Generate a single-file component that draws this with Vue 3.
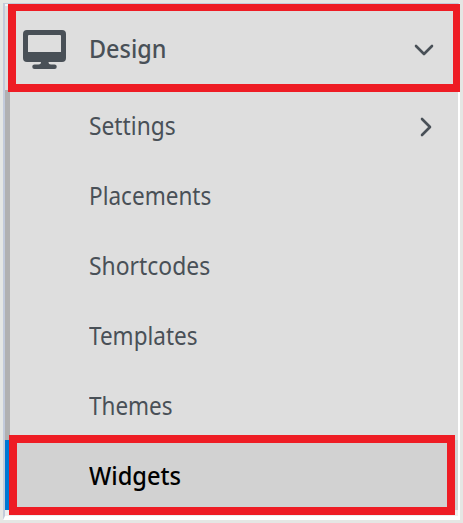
<script setup>
const items = [
  { name: 'settings', label: 'Settings', more: true },
  { name: 'placements', label: 'Placements' },
  { name: 'shortcodes', label: 'Shortcodes' },
  { name: 'templates', label: 'Templates' },
  { name: 'themes', label: 'Themes' },
  { name: 'widgets', label: 'Widgets', active: true },
]
</script>

<template>
  <div class="page">
    <nav class="panel">
      <header class="head">
        <svg class="monitor" width="43" height="39" viewBox="0 0 43 39">
          <path fill-rule="evenodd" d="M4 0H39Q43 0 43 4V28Q43 32 39 32H25.500Q25.500 34.500 28 34.500H31.500A2.200 2.200 0 0 1 31.500 39H11.500A2.200 2.200 0 0 1 11.500 34.500H15.500Q18 34.500 18 32H4Q0 32 0 28V4Q0 0 4 0ZM6 5Q5 5 5 6V22H38V6Q38 5 37 5Z" />
        </svg>
        <span class="label design">Design</span>
        <svg class="chev down" width="20" height="12" viewBox="0 0 20 12"><path d="M2 2L10 10L18 2" /></svg>
      </header>
      <ul class="list">
        <li v-for="item in items" :key="item.name" class="item" :class="{ active: item.active }">
          <span class="label" :class="item.name">{{ item.label }}</span>
          <svg v-if="item.more" class="chev right" width="12" height="20" viewBox="0 0 12 20"><path d="M2 2L10 10L2 18" /></svg>
        </li>
      </ul>
    </nav>
    <div class="mark mark-head"></div>
    <div class="mark mark-item"></div>
  </div>
</template>

<style>
body { margin: 0; }
</style>

<style scoped>
.page {
  position: relative;
  box-sizing: border-box;
  width: 463px;
  height: 523px;
  padding: 3px;
  background: #e5e7e4;
  font-family: "Noto Sans", "Open Sans", sans-serif;
  overflow: hidden;
}
.panel {
  box-sizing: border-box;
  height: 517px;
  border-top: 1px solid #c3cad8;
  border-left: 2px solid #c3cbdb;
  border-right: 2px solid #fff;
  border-bottom: 4px solid #fff;
  background: #efefef;
}
.head {
  box-sizing: border-box;
  display: flex;
  align-items: center;
  height: 86px;
  padding: 4px 24px 0 18px;
  border-top: 2px solid #f4f5f8;
  background: #dedede;
}
.monitor { fill: #495057; flex: none; margin-top: -2px; }
.head .label { margin-left: 23px; margin-top: -2px; }
.list { margin: 0; padding: 0; list-style: none; }
.item {
  box-sizing: border-box;
  display: flex;
  align-items: center;
  height: 70px;
  padding: 3px 26px 0 79px;
  border-left: 5px solid #b1b1b1;
  background: #dedede;
}
.item.active { background: #d2d2d2; border-left-color: #0078d4; }
.label {
  font-size: 24.5px;
  line-height: 34px;
  color: #495057;
  white-space: nowrap;
  transform-origin: 0 50%;
}
.item .label { margin-top: -2px; }
.design { font-weight: 500; transform: scaleX(0.955); }
.settings { transform: scaleX(0.93); }
.placements { transform: scaleX(0.92); }
.shortcodes { transform: scaleX(0.935); }
.templates { transform: scaleX(0.918); }
.themes { transform: scaleX(0.918); }
.widgets { transform: scaleX(0.965); }
.active .label { font-weight: 500; color: #000; }
.chev {
  margin-left: auto;
  fill: none;
  stroke: #495057;
  stroke-width: 2.6;
  stroke-linecap: round;
  stroke-linejoin: round;
}
.mark {
  position: absolute;
  box-sizing: border-box;
  border: 8px solid #ee1c24;
}
.mark-head {
  left: 8px;
  top: 4px;
  width: 452px;
  height: 88px;
  border-top-width: 7px;
  border-right-width: 7px;
}
.mark-item { left: 9px; top: 435px; width: 446px; height: 80px; }
</style>
